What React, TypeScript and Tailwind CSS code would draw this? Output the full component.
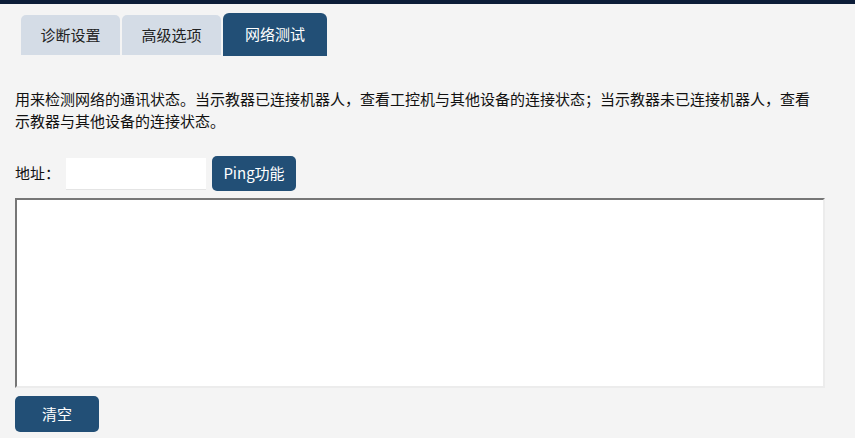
import React from "react";

const tabs = ["诊断设置", "高级选项", "网络测试"];

export default function App() {
  const active = 2;
  return (
    <div
      className="min-h-[438px] bg-[#f4f4f4] text-[#111] text-[15px]"
      style={{ fontFamily: '"Noto Sans CJK SC", "Noto Sans", sans-serif' }}
    >
      <div className="h-[4px] bg-[#0c1d38]" />
      <div className="flex items-end gap-[2px] pl-[21px] pt-[9px]">
        {tabs.map((t, i) =>
          i === active ? (
            <div
              key={t}
              className="flex h-[43px] w-[104px] items-center justify-center rounded-t-[6px] bg-[#224f76] text-white"
            >
              {t}
            </div>
          ) : (
            <div
              key={t}
              className="mb-[1px] flex h-[40px] w-[99px] items-center justify-center rounded-t-[5px] bg-[#d4dce6] text-[#222]"
            >
              {t}
            </div>
          )
        )}
      </div>
      <p className="mt-[32px] ml-[15px] w-[805px] leading-[22px]">
        用来检测网络的通讯状态。当示教器已连接机器人，查看工控机与其他设备的连接状态；当示教器未已连接机器人，查看示教器与其他设备的连接状态。
      </p>
      <div className="mt-[24px] flex h-[35px] items-center pl-[15px]">
        <span className="w-[51px]">地址：</span>
        <input
          className="h-[32px] w-[140px] border-b border-[#e4e4e4] bg-white px-2 outline-none"
          type="text"
        />
        <button className="ml-[6px] h-[35px] w-[84px] rounded-[5px] bg-[#224f76] text-white">
          Ping功能
        </button>
      </div>
      <div className="mt-[7px] px-[15px]">
        <textarea className="block h-[190px] w-[810px] resize-none border-2 border-t-[#767676] border-l-[#767676] border-r-[#ececec] border-b-[#ececec] bg-white outline-none" />
      </div>
      <div className="mt-[8px] pl-[15px]">
        <button className="h-[36px] w-[84px] rounded-[5px] bg-[#224f76] text-white">
          清空
        </button>
      </div>
    </div>
  );
}
